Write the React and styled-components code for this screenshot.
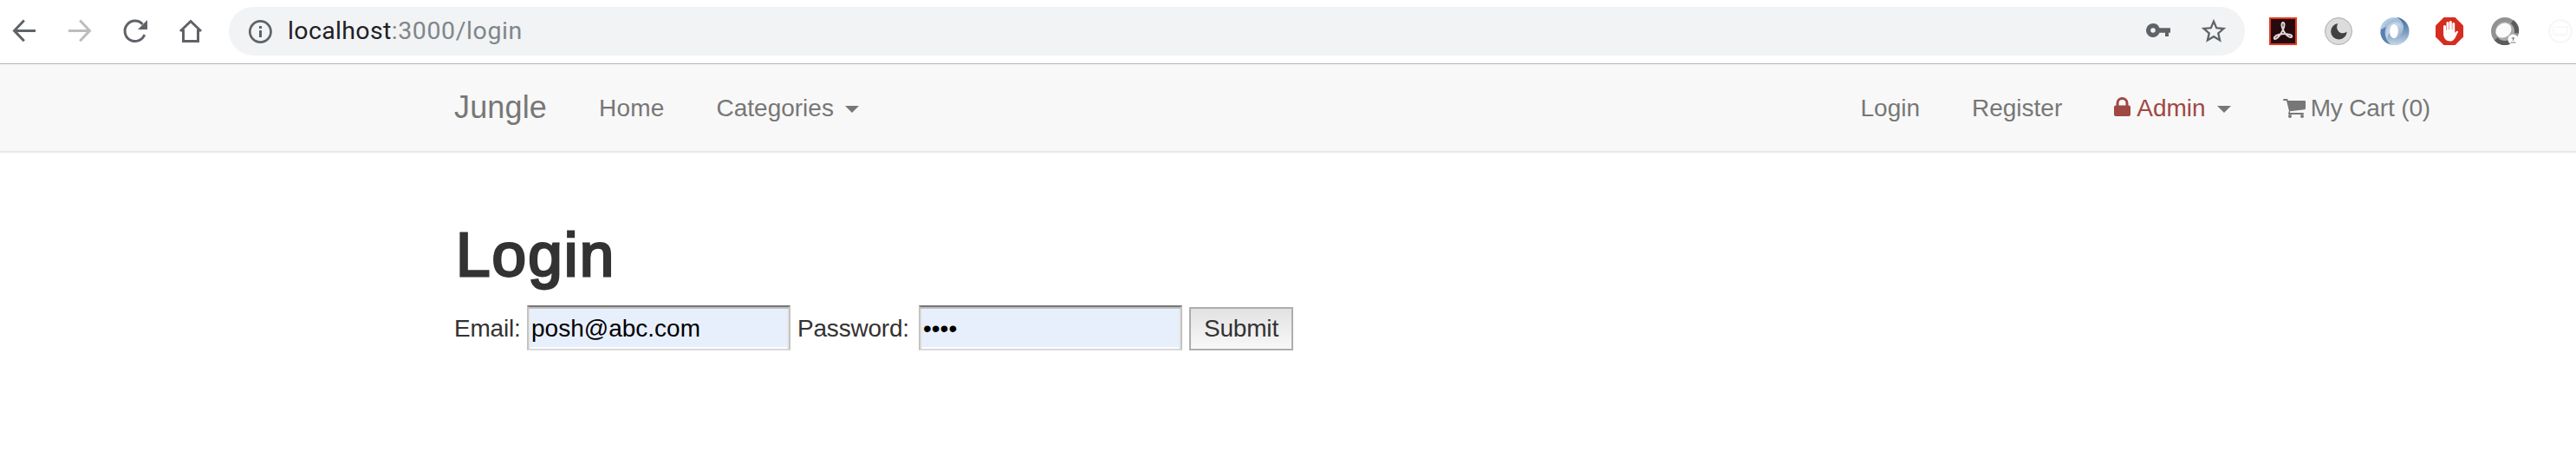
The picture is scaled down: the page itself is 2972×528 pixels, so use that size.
import React from "react";
import styled, { createGlobalStyle } from "styled-components";

const Global = createGlobalStyle`
  *, *::before, *::after { box-sizing: border-box; }
  body { margin: 0; background: #fff; color: #333; font: 28px/40px "Liberation Sans", Arial, sans-serif; }
  svg { display: block; flex: none; overflow: visible; }
`;
const Toolbar = styled.header`
  height: 74px;
  display: flex;
  padding: 8px 0 0 12px;
  border-bottom: 1px solid #b4b4b6;
  overflow: hidden;
`;
const NavButtons = styled.div`
  width: 252px;
  height: 56px;
  display: flex;
  gap: 32px;
  padding-top: 12px;
  color: #5f6368;
`;
const AddressBar = styled.div`
  width: 2326px;
  height: 56px;
  display: flex;
  align-items: center;
  padding: 0 20px;
  border-radius: 28px;
  background: #f1f3f4;
  color: #5f6368;
`;
const Url = styled.div`
  flex: 1;
  margin-left: 16px;
  font: 28.5px/40px Roboto, sans-serif;
  letter-spacing: 0.6px;
  color: #80868b;
  span { color: #202124; letter-spacing: 0.35px; }
`;
const AddressActions = styled.div`
  display: flex;
  gap: 32px;
`;
const Extensions = styled.div`
  display: flex;
  gap: 32px;
  padding: 12px 0 0 28px;
`;
const Navbar = styled.nav`
  height: 102px;
  display: flex;
  justify-content: space-between;
  padding: 0 138px 0 494px;
  background: #f8f8f8;
  border-bottom: 2px solid #e7e7e7;
`;
const NavGroup = styled.div`
  display: flex;
`;
const NavLink = styled.a`
  display: flex;
  align-items: center;
  height: 100px;
  padding: ${(p) => (p.$brand ? "0" : "2px")} 30px 0;
  color: #777;
  font-size: ${(p) => (p.$brand ? "36px" : "28px")};
  letter-spacing: ${(p) => p.$spacing || "0"};
  white-space: pre;
`;
const AdminLabel = styled.span`
  display: flex;
  align-items: center;
  gap: 7px;
  color: #a04844;
`;
const CartLabel = styled.span`
  display: flex;
  align-items: center;
  gap: 6px;
`;
const Caret = styled.span`
  margin: 2px 0 0 13px;
  border-top: 8px solid #777;
  border-left: 8px solid transparent;
  border-right: 8px solid transparent;
`;
const Page = styled.main`
  padding: 78px 0 0 524px;
`;
const Title = styled.h1`
  margin: 0 0 18px 2px;
  font-size: 71px;
  line-height: 80px;
  font-weight: 400;
  letter-spacing: 2.1px;
  -webkit-text-stroke: 2.8px #333;
`;
const Form = styled.form`
  display: flex;
  align-items: flex-start;
`;
const Label = styled.label`
  width: ${(p) => p.$width}px;
  line-height: 40px;
  padding-top: 7px;
  letter-spacing: -0.2px;
`;
const Input = styled.input`
  width: 304px;
  height: 52px;
  margin: 0 8px 0 0;
  padding: 2px 3px 0;
  border: 2px solid;
  border-color: #767676 #c3c3c3 #d9d9d9;
  border-radius: 0;
  outline: none;
  background: #e8effc;
  box-shadow: inset 0 2px #c0c0c0, inset 2px 0 #e8e8e8, inset -2px 0 #e8e8e8, inset 0 -2px #fff;
  color: #000;
  font: 28px "Liberation Sans", Arial, sans-serif;
`;
const Submit = styled.button`
  width: 120px;
  height: 50px;
  margin-top: 2px;
  padding: 0;
  border: 2px solid #adadad;
  border-radius: 0;
  background: linear-gradient(#e2e2e2, #f8f8f8);
  color: #333;
  font: 28px "Liberation Sans", Arial, sans-serif;
  letter-spacing: -0.2px;
`;
const LockBox = styled.span`
  margin-bottom: 4px;
`;

const Icon = ({ children, size = 32, box = "0 0 32 32" }) => (
  <svg width={size} height={size} viewBox={box} fill="none">{children}</svg>
);
const Back = () => (
  <Icon><path d="M29 15.4H4.5M15.8 3.5L4.5 15.4L15.8 27.3" stroke="currentColor" strokeWidth="3" /></Icon>
);
const Forward = () => (
  <Icon><path d="M3 15.4H27.5M16.2 3.5L27.5 15.4L16.2 27.3" stroke="#bbbdbf" strokeWidth="3" /></Icon>
);
const Reload = () => (
  <Icon>
    <path d="M26.7 20A11.7 11.7 0 1 1 24.5 8" stroke="currentColor" strokeWidth="3" />
    <path d="M30 3V14H19Z" fill="currentColor" />
  </Icon>
);
const Home = () => (
  <Icon><path d="M4 16L16 4.5L28 16M7.5 14V27.5H24.5V14" stroke="currentColor" strokeWidth="3" /></Icon>
);
const Info = () => (
  <Icon>
    <circle cx="16.4" cy="16.5" r="12.1" stroke="currentColor" strokeWidth="2.7" />
    <path d="M16.5 10V13M16.5 15V23" stroke="currentColor" strokeWidth="3" />
  </Icon>
);
const Key = () => (
  <Icon>
    <path fillRule="evenodd" fill="currentColor" d="M10 7a8 8 0 1 0 7.5 10.7H24V22H28V17.7H30V12.3H17.5A8 8 0 0 0 10 7ZM10 12.2a2.8 2.8 0 1 1 0 5.6a2.8 2.8 0 0 1 0-5.6Z" />
  </Icon>
);
const Star = () => (
  <Icon box="0.8 0.8 22.4 22.4">
    <path fill="currentColor" d="M22 9.24l-7.19-.62L12 2 9.19 8.63 2 9.24l5.46 4.73L5.82 21 12 17.27 18.18 21l-1.63-7.03L22 9.24zM12 15.4l-3.76 2.27 1-4.28-3.32-2.88 4.38-.38L12 6.1l1.71 4.04 4.38.38-3.32 2.88 1 4.28L12 15.4z" />
  </Icon>
);
const Acrobat = () => (
  <Icon>
    <path fill="#260a0d" stroke="#e23a20" strokeWidth="2" d="M1 1H31V31H1Z" />
    <path d="M15.5 6C19.5 5.500 17 14 13 19.500C9 26 4.500 26 6 23C8 20 16 18 22 19.500C29 20.500 26 24.500 23 22.500C17 19 12.500 9 15.500 6Z" stroke="#ded8d8" strokeWidth="2" />
  </Icon>
);
const Moon = () => (
  <Icon>
    <circle cx="16" cy="16" r="15.5" fill="#dcdcdc" stroke="#adadad" />
    <path fill="#424242" d="M15.5 7A9.3 9.3 0 1 0 25.7 16.5A7 7 0 0 1 15.5 7Z" />
  </Icon>
);
const Swirl = () => (
  <Icon>
    <defs>
      <linearGradient id="swirlLight" x1="0" y1="0" x2="1" y2="1"><stop stopColor="#a9c2da" /><stop offset=".45" stopColor="#c5d7e6" /><stop offset="1" stopColor="#6789b5" /></linearGradient>
      <linearGradient id="swirlDark" x1="0" y1="0" x2="0" y2="1"><stop stopColor="#446b9d" /><stop offset=".5" stopColor="#7898bf" /><stop offset="1" stopColor="#c6d8e7" /></linearGradient>
    </defs>
    <circle cx="16" cy="16" r="16" fill="url(#swirlLight)" />
    <path d="M19 0C28 5 30 15 22 22C17 26 10 24 11 18C5 25 10 32 16 32A16 16 0 0 0 19 0Z" fill="url(#swirlDark)" />
    <path d="M19 1C11 1 2 9 1 19C2 26 7 31 11 31C5 24 5 14 11 8C16 4 22 5 25 10C26 5 23 2 19 1Z" fill="#a6c0db" />
    <path d="M1 14C-1 22 5 30 12 31C6 26 4 18 7 11Z" fill="#5a7fae" />
    <ellipse cx="16" cy="16" rx="4.8" ry="8" fill="#fff" />
  </Icon>
);
const AdBlock = () => (
  <Icon>
    <path fill="#d52d20" d="M9.5 0H22.5L32 9.5V22.5L22.5 32H9.5L0 22.5V9.5Z" />
    <path fill="#fff" d="M9 10Q10.5 8 12 10V15H12.5V6Q14 4 15.3 6V14H15.8V5Q17.2 3 18.8 5V14H19.3V7Q21 5 22.2 7V18L24 16Q26 15 26 17C23 22 22 27 18 27.5C11 28 9 23 9 18Z" />
  </Icon>
);
const Ring = () => (
  <Icon>
    <circle cx="16" cy="16" r="13" fill="#fff" stroke="#929292" strokeWidth="6" />
    <path d="M24 5.5A13 13 0 0 1 29 18M6 24.5A13 13 0 0 0 21 28" stroke="#5c5c5c" strokeWidth="6" />
    <circle cx="16" cy="16" r="11" fill="#aaa" />
    <ellipse cx="14.5" cy="15" rx="9.5" ry="8" fill="#fbfbfb" transform="rotate(-35 14.5 15)" />
    <circle cx="25.5" cy="25.5" r="6" fill="#fff" />
    <path d="M25.5 27V23M23.8 24.8L25.5 23L27.2 24.8M22.5 29H28.5" stroke="#777" />
  </Icon>
);
const Faded = () => (
  <Icon>
    <circle cx="16" cy="16" r="12.8" stroke="#f7f7f7" strokeWidth="2.5" />
    <path d="M8 11H24V19H8ZM9 21H23" stroke="#f8f8f8" strokeWidth="1.5" />
  </Icon>
);
const Lock = () => (
  <LockBox>
    <svg width="19" height="22" viewBox="0 0 19 22" fill="none">
      <rect y="9.5" width="19" height="12.5" rx="2" fill="currentColor" />
      <path d="M4 10V7A5.5 5.5 0 0 1 15 7V10" stroke="currentColor" strokeWidth="3" />
    </svg>
  </LockBox>
);
const Cart = () => (
  <svg width="26" height="22" viewBox="0 0 26 22">
    <path fill="currentColor" d="M0 1Q0 0 1 0H5L6 2H25Q26 2 26 3V11Q26 12 25 12.2L8 14.3L8 16H23Q24 16 24 17T23 18H7Q6 18 6 17L7 14L4 2H1Q0 2 0 1Z" />
    <circle cx="8" cy="20" r="2" fill="currentColor" /><circle cx="22" cy="20" r="2" fill="currentColor" />
  </svg>
);

export default function App() {
  return (
    <>
      <Global />
      <Toolbar>
        <NavButtons><Back /><Forward /><Reload /><Home /></NavButtons>
        <AddressBar>
          <Info />
          <Url><span>localhost</span>:3000/login</Url>
          <AddressActions><Key /><Star /></AddressActions>
        </AddressBar>
        <Extensions><Acrobat /><Moon /><Swirl /><AdBlock /><Ring /><Faded /></Extensions>
      </Toolbar>
      <Navbar>
        <NavGroup>
          <NavLink $brand $spacing="0.15px">Jungle</NavLink>
          <NavLink $spacing="0.2px">Home</NavLink>
          <NavLink>Categories<Caret /></NavLink>
        </NavGroup>
        <NavGroup>
          <NavLink>Login</NavLink>
          <NavLink>Register</NavLink>
          <NavLink><AdminLabel><Lock />Admin</AdminLabel><Caret /></NavLink>
          <NavLink $spacing="-0.15px"><CartLabel><Cart />My Cart (0)</CartLabel></NavLink>
        </NavGroup>
      </Navbar>
      <Page>
        <Title>Login</Title>
        <Form>
          <Label $width={84}>Email:</Label>
          <Input type="text" defaultValue="posh@abc.com" />
          <Label $width={140}>Password:</Label>
          <Input type="password" defaultValue="1234" />
          <Submit type="button">Submit</Submit>
        </Form>
      </Page>
    </>
  );
}
